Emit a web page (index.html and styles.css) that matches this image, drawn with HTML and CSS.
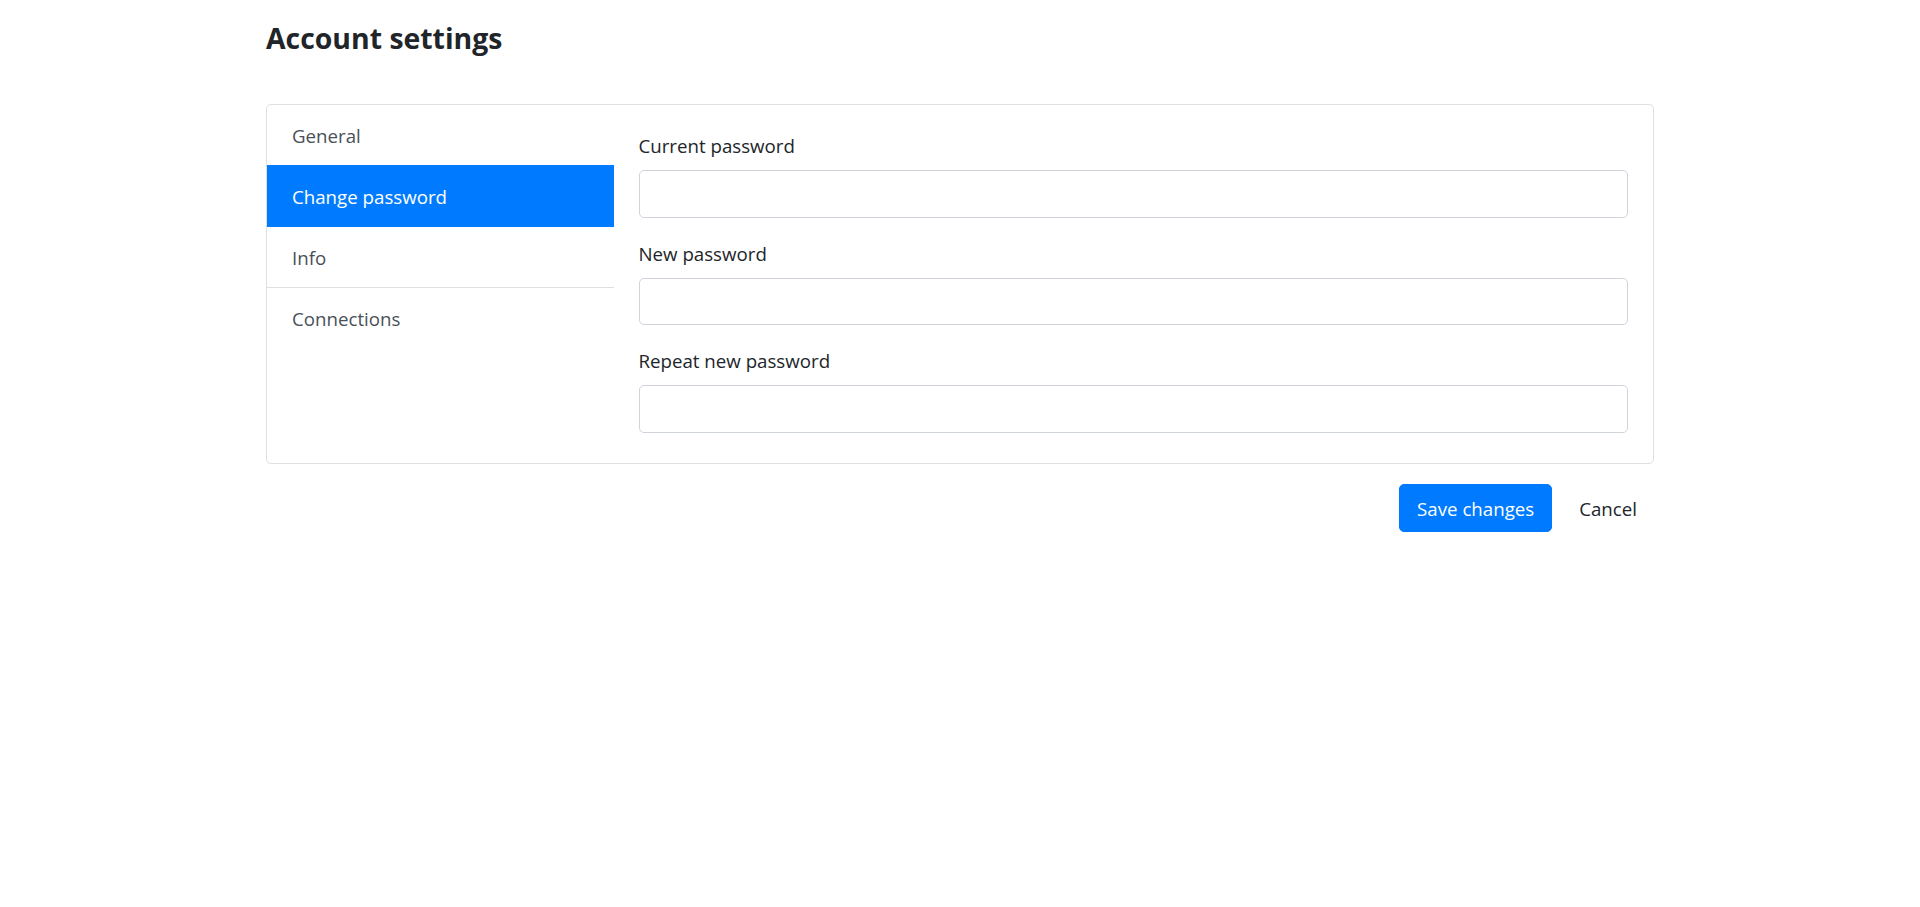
FILE: index.html
```html
<!DOCTYPE html>
<html lang="en">
<head>
<meta charset="utf-8">
<title>Account settings</title>
<link rel="stylesheet" href="styles.css">
</head>
<body>
<div class="container">
  <h4 class="page-title">Account settings</h4>
  <div class="card">
    <div class="side-nav">
      <a class="nav-item" href="#">General</a>
      <a class="nav-item active" href="#">Change password</a>
      <a class="nav-item" href="#">Info</a>
      <a class="nav-item last" href="#">Connections</a>
    </div>
    <div class="pane">
      <div class="form-group">
        <label class="form-label">Current password</label>
        <input class="form-control" type="password">
      </div>
      <div class="form-group">
        <label class="form-label">New password</label>
        <input class="form-control" type="password">
      </div>
      <div class="form-group">
        <label class="form-label">Repeat new password</label>
        <input class="form-control" type="password">
      </div>
    </div>
  </div>
  <div class="actions">
    <button class="btn btn-primary" type="button">Save changes</button>
    <button class="btn btn-default" type="button">Cancel</button>
  </div>
</div>
</body>
</html>
```
FILE: styles.css
```css
* { box-sizing: border-box; }

body {
  margin: 0;
  background: #ffffff;
  color: #212529;
  font-family: "Open Sans", "Noto Sans", sans-serif;
  font-size: 18.7px;
}

.container {
  width: 1388px;
  margin: 0 auto;
  padding-top: 20px;
}

.page-title {
  margin: 0 0 48px;
  font-size: 28.4px;
  font-weight: 700;
  line-height: 36px;
  color: #212529;
}

.card {
  display: flex;
  border: 1px solid #dfdfdf;
  border-radius: 5px;
  overflow: hidden;
  background: #fff;
}

.side-nav {
  flex: 0 0 25%;
  display: flex;
  flex-direction: column;
}

.nav-item {
  position: relative;
  display: block;
  padding: 16px 25px 14px;
  line-height: 30px;
  color: #495057;
  text-decoration: none;
  border-bottom: 1px solid #dfdfdf;
}

.nav-item.active {
  z-index: 2;
  margin-top: -1px;
  color: #fff;
  background: #007bff;
  border-top: 1px solid #007bff;
  border-bottom-color: #007bff;
}

.nav-item.last { border-bottom: 0; }

.pane {
  flex: 1;
  padding: 25px 25px 10.5px;
}

.form-group { margin-bottom: 20px; }

.form-label {
  display: block;
  padding-top: 1px;
  line-height: 30px;
  margin-bottom: 9px;
  color: #212529;
}

.form-control {
  display: block;
  width: 100%;
  height: 47.5px;
  padding: 0 15px;
  border: 1px solid #ced4da;
  border-radius: 5px;
  background: #fff;
  font: inherit;
}

.actions {
  display: flex;
  justify-content: flex-end;
  gap: 10px;
  margin-top: 20px;
}

.btn {
  height: 48px;
  padding: 1px 17px 0;
  border: 1px solid transparent;
  border-radius: 5px;
  font: inherit;
  line-height: 30px;
  cursor: pointer;
}

.btn-primary {
  background: #007bff;
  border-color: #007bff;
  color: #fff;
}

.btn-default {
  background: transparent;
  color: #212529;
  padding: 1px 16px 0;
}
```
